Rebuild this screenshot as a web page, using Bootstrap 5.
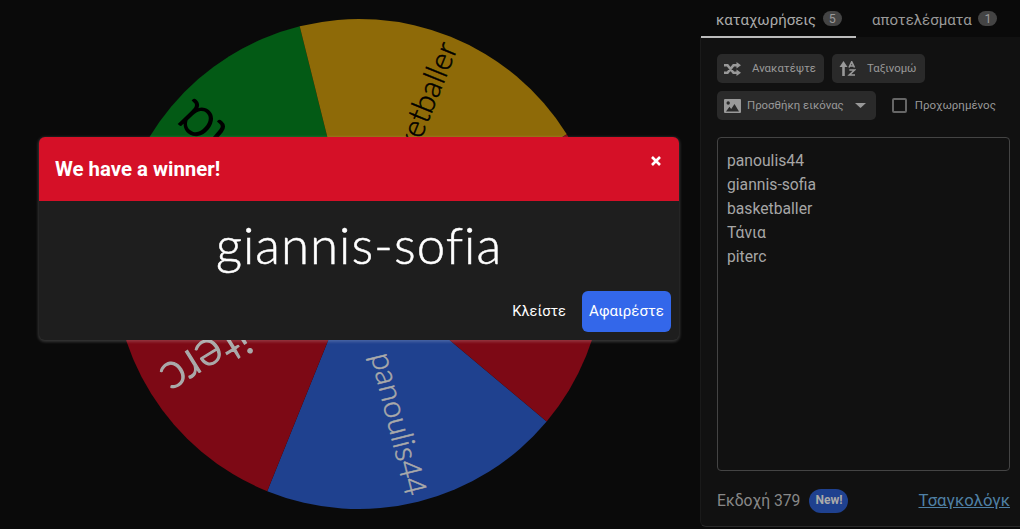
<!DOCTYPE html>
<html lang="en">
<head>
    <meta charset="UTF-8">
    <meta name="viewport" content="width=device-width, initial-scale=1.0">
    <title>Wheel</title>
    <link rel="stylesheet" href="https://cdn.jsdelivr.net/npm/bootstrap@5.3.0/dist/css/bootstrap.min.css">
    <style>
        html, body { height: 100%; overflow: hidden; }
        body { background: #0a0a0a; font-family: Roboto, "Noto Sans", sans-serif; color: #aaa; }
        .app-shell { height: 529px; }
        .wheel-area { width: 700px; flex: none; position: relative; }
        .wheel-svg { display: block; width: 700px; height: 529px; }
        .wheel-text { font-family: Lato, sans-serif; font-weight: 300; }

        .side-panel { width: 320px; flex: none; }
        .tab-row { height: 38px; }
        .tab-item { font-size: 15px; color: #999; padding: 0 15px; height: 38px; line-height: 41px; white-space: nowrap; }
        .tab-item.on { color: #aaa; border-bottom: 2px solid #bbb; width: 155px; margin-left: 1px; margin-right: 1px; }
        .tab-count { display: inline-block; background: #444; color: #999; font-size: 12.5px; line-height: 15px; height: 15px; min-width: 19px; text-align: center; border-radius: 8px; margin-left: 3px; vertical-align: 2px; }
        .panel-body { background: #111; height: 490px; margin-top: -1px; border-bottom-left-radius: 6px; border-left: 1px solid #1a1a1a; border-bottom: 1px solid #2a2a2a; padding: 17px 10px 0 16px; }
        .tool-btn { background: #2a2a2a; color: #999; font-size: 11.4px; height: 29px; border-radius: 5px; padding: 0 8px 0 7px; border: 0; display: flex; align-items: center; white-space: nowrap; }
        .tool-row { margin-bottom: 8px; gap: 8px; }
        .icon-gap { margin-right: 11px; }
        .img-gap { margin-right: 6px; }
        .caret-gap { margin-left: 11px; margin-right: 2px; }
        .fake-check { width: 15px; height: 15px; border: 2px solid #666; border-radius: 2px; background: transparent; margin-right: 8px; }
        .check-row { margin-left: 8px; }
        .check-label { font-size: 11.5px; color: #999; }
        .names-box { height: 334px; border: 1px solid #444; border-radius: 4px; background: #111; color: #a6a6a6; font-size: 15.7px; line-height: 24px; padding: 11px 9px; margin-top: 17px; white-space: pre-line; }
        .foot-row { margin-top: 17px; font-size: 15.7px; color: #888; }
        .new-pill { background: #1f418f; color: #aaa; font-size: 12px; font-weight: 700; padding: 0 6px; height: 24px; line-height: 23px; border-radius: 12px; margin-left: 9px; }
        .author-link { color: #4f80a5; font-size: 16.7px; }

        .winner-box { position: absolute; left: 39px; top: 137px; width: 640px; height: 203px; background: #1e1e1e; border-radius: 6px; box-shadow: 0 1px 3px 1px rgba(255,255,255,.18); overflow: hidden; }
        .winner-head { background: #d51027; height: 64px; padding: 0 16px; color: #fff; }
        .winner-title { font-size: 20.4px; font-weight: 700; }
        .winner-x { width: 10px; height: 10px; margin-right: 2px; margin-top: -16px; }
        .winner-name { font-family: Lato, sans-serif; font-weight: 300; font-size: 51px; color: #fff; -webkit-text-stroke: .5px #fff; line-height: 60px; padding-top: 14px; height: 90px; letter-spacing: 1px; }
        .btn-close-txt { color: #fff; font-size: 14.6px; margin-right: 16px; }
        .btn-remove { background: #3367ea; color: #fff; font-size: 15px; height: 41px; width: 89px; border-radius: 6px; border: 0; padding: 0; }
    </style>
</head>
<body>
    <div class="d-flex app-shell">
        <div class="wheel-area">
            <svg class="wheel-svg" id="wheel" viewBox="0 0 700 529"></svg>

            <div class="winner-box">
                <div class="winner-head d-flex align-items-center justify-content-between">
                    <span class="winner-title">We have a winner!</span>
                    <svg class="winner-x" viewBox="0 0 10 10"><path d="M1 1 L9 9 M9 1 L1 9" stroke="#fff" stroke-width="2.6" fill="none"/></svg>
                </div>
                <div class="winner-name text-center">giannis-sofia</div>
                <div class="d-flex justify-content-end align-items-center px-2">
                    <span class="btn-close-txt">Κλείστε</span>
                    <button class="btn-remove">Αφαιρέστε</button>
                </div>
            </div>
        </div>

        <div class="side-panel">
            <div class="tab-row d-flex">
                <div class="tab-item on">καταχωρήσεις <span class="tab-count">5</span></div>
                <div class="tab-item">αποτελέσματα <span class="tab-count">1</span></div>
            </div>
            <div class="panel-body">
                <div class="d-flex tool-row">
                    <button class="tool-btn">
                        <svg width="17" height="14" viewBox="0 0 17 14" class="icon-gap"><path d="M0 3.2 H3.5 L9.5 10.8 H13 M0 10.8 H3.5 L9.5 3.2 H13" stroke="#999" stroke-width="2.6" fill="none"/><path d="M12.5 0 L17 3.2 L12.5 6.4Z M12.5 7.6 L17 10.8 L12.5 14Z" fill="#999"/></svg>
                        <span>Ανακατέψτε</span>
                    </button>
                    <button class="tool-btn">
                        <svg width="17" height="15" viewBox="0 0 16 15" class="icon-gap"><path d="M4 4 V15" stroke="#999" stroke-width="2.6"/><path d="M0 6 L4 0 L8 6Z" fill="#999"/><path d="M9.5 6.5 L12.2 .8 L15 6.5 M10.4 5 H14.2 M9.8 9 H15 L9.8 14 H15.5" stroke="#999" stroke-width="1.6" fill="none"/></svg>
                        <span>Ταξινομώ</span>
                    </button>
                </div>
                <div class="d-flex align-items-center tool-row">
                    <button class="tool-btn">
                        <svg width="17" height="14" viewBox="0 0 17 14" class="img-gap"><path fill-rule="evenodd" d="M1 0 H16 Q17 0 17 1 V13 Q17 14 16 14 H1 Q0 14 0 13 V1 Q0 0 1 0Z M2 12.5 H15 L10.5 5 L7.2 10 L5.5 7.8Z" fill="#999"/><circle cx="4.2" cy="4" r="1.7" fill="#2a2a2a"/></svg>
                        <span>Προσθήκη εικόνας</span>
                        <svg width="11" height="5" viewBox="0 0 11 5" class="caret-gap"><path d="M0 0 H11 L5.5 5Z" fill="#999"/></svg>
                    </button>
                    <div class="d-flex align-items-center check-row">
                        <div class="fake-check"></div>
                        <span class="check-label">Προχωρημένος</span>
                    </div>
                </div>
                <div class="names-box">panoulis44
giannis-sofia
basketballer
Τάνια
piterc</div>
                <div class="d-flex align-items-center foot-row">
                    <span>Εκδοχή 379</span>
                    <span class="new-pill">New!</span>
                    <a href="#" class="author-link ms-auto">Τσαγκολόγκ</a>
                </div>
            </div>
        </div>
    </div>

    <script>
        // wheel slices, angles clockwise from east
        const cx = 359, cy = 264, r = 245;
        const slices = [
            { name: "panoulis44", from: 40, fill: "#1f418f", color: "#aaa", size: 31, gap: 7, line: 0.5 },
            { name: "piterc", from: 112, fill: "#7d0915", color: "#aaa", size: 50, gap: 18, line: 1.2 },
            { name: "Τάνια", from: 184, fill: "#035a15", color: "#000", size: 58, gap: 12, line: 1.6 },
            { name: "basketballer", from: 256, fill: "#8e6a08", color: "#000", size: 31, gap: 7, line: 0.5 },
            { name: "giannis-sofia", from: 328, fill: "#7d0915", color: "#aaa", size: 31, gap: 7, line: 0.5 }
        ];
        const svg = document.getElementById("wheel");
        let html = "";
        function pt(a) {
            const t = a * Math.PI / 180;
            return (cx + r * Math.cos(t)).toFixed(1) + " " + (cy + r * Math.sin(t)).toFixed(1);
        }
        slices.forEach(s => {
            html += `<path d="M${cx} ${cy} L${pt(s.from)} A${r} ${r} 0 0 1 ${pt(s.from + 72)}Z" fill="${s.fill}"/>`;
        });
        slices.forEach(s => {
            const mid = s.from + 36;
            html += `<text class="wheel-text" transform="translate(${cx} ${cy}) rotate(${mid})" x="${r - s.gap}" y="${s.size * 0.35}" text-anchor="end" font-size="${s.size}" fill="${s.color}" stroke="${s.color}" stroke-width="${s.line}">${s.name}</text>`;
        });
        svg.innerHTML = html;
    </script>
    <script src="https://cdn.jsdelivr.net/npm/bootstrap@5.3.0/dist/js/bootstrap.bundle.min.js"></script>
</body>
</html>
